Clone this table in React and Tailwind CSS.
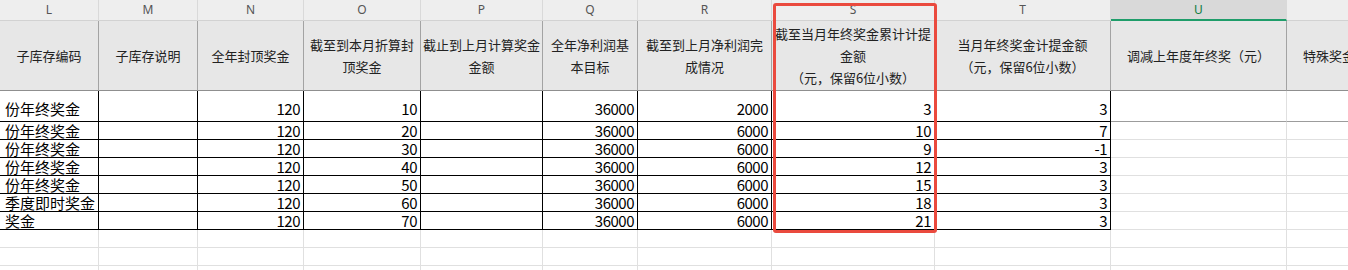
import { Fragment } from "react"

// column widths include the 1px right grid line
const columns = [
    { key: 'L', width: 'w-[99px]' },
    { key: 'M', width: 'w-[99px]' },
    { key: 'N', width: 'w-[106px]' },
    { key: 'O', width: 'w-[117px]' },
    { key: 'P', width: 'w-[122px]' },
    { key: 'Q', width: 'w-[95px]' },
    { key: 'R', width: 'w-[134px]' },
    { key: 'S', width: 'w-[163px]' },
    { key: 'T', width: 'w-[176px]' },
    { key: 'U', width: 'w-[176px]' },
    { key: 'V', width: 'w-[176px]' }
]

const headers = [
    ['子库存编码'],
    ['子库存说明'],
    ['全年封顶奖金'],
    ['截至到本月折算封', '顶奖金'],
    ['截止到上月计算奖金', '金额'],
    ['全年净利润基', '本目标'],
    ['截至到上月净利润完', '成情况'],
    ['截至当月年终奖金累计计提', '金额', '（元，保留6位小数）'],
    ['当月年终奖金计提金额', '（元，保留6位小数）'],
    ['调减上年度年终奖（元）'],
    ['特殊奖金调整金额（元）']
]

const rows = [
    ['份年终奖金', '', 120, 10, '', 36000, 2000, 3, 3],
    ['份年终奖金', '', 120, 20, '', 36000, 6000, 10, 7],
    ['份年终奖金', '', 120, 30, '', 36000, 6000, 9, -1],
    ['份年终奖金', '', 120, 40, '', 36000, 6000, 12, 3],
    ['份年终奖金', '', 120, 50, '', 36000, 6000, 15, 3],
    ['季度即时奖金', '', 120, 60, '', 36000, 6000, 18, 3],
    ['奖金', '', 120, 70, '', 36000, 6000, 21, 3]
]

function App() {
    return (
        <div className="relative w-[1348px] h-[270px] overflow-hidden bg-white font-['Noto_Sans_CJK_SC','Noto_Sans',sans-serif] text-black">
            {/* column letters */}
            <div className="flex h-[21px] bg-[#eeeeee]">
                {columns.map(col => (
                    <div key={col.key} className={`${col.width} shrink-0 flex items-center justify-center text-[12px] font-['Noto_Sans',sans-serif] border-r border-[#d9d9d9] ${col.key === 'U' ? 'bg-[#d9d9d9] text-[#107c41] border-b-2 border-b-[#1f9d6a]' : 'text-[#555555] border-b border-b-[#d2d2d2]'}`}>
                        {col.key}
                    </div>
                ))}
            </div>

            {/* header row */}
            <div className="flex h-[70px]">
                {columns.map((col, i) => (
                    <div key={col.key} className={`${col.width} shrink-0 flex flex-col items-center justify-center bg-[#e7e7e7] border-r border-b border-r-[#a3a3a3] border-b-[#8f8f8f] text-[13px] leading-[22px] text-[#222222] whitespace-nowrap overflow-hidden`}>
                        {headers[i].map(line => <span key={line}>{line}</span>)}
                    </div>
                ))}
            </div>

            {/* data rows */}
            {rows.map((row, r) => (
                <div key={r} className={`flex ${r === 0 ? 'h-[31px]' : 'h-[18px]'}`}>
                    {columns.map((col, c) => {
                        const value = row[c]
                        const inData = c < 9
                        const isText = c === 0
                        return (
                            <div key={col.key} className={`${col.width} shrink-0 flex items-end overflow-hidden whitespace-nowrap ${isText ? 'justify-start pl-[5px] text-[15px]' : 'justify-end pr-[3px] text-[15px] tracking-[-0.5px]'} ${r === 0 ? 'pb-[4px]' : ''} leading-[17px] ${inData ? 'border-r border-b border-black' : `border-r border-b border-r-[#e0e0e0] ${r === 0 ? 'border-b-[#9c9c9c]' : 'border-b-[#e0e0e0]'}`}`}>
                                {inData && value !== '' ? value : ''}
                            </div>
                        )
                    })}
                </div>
            ))}

            {/* empty rows */}
            {[0, 1, 2].map(r => (
                <div key={r} className="flex h-[18px]">
                    {columns.map(col => (
                        <div key={col.key} className={`${col.width} shrink-0 border-r border-b border-[#e0e0e0]`}></div>
                    ))}
                </div>
            ))}

            {/* red highlight over column S */}
            <div className="absolute left-[773px] top-[3px] w-[164px] h-[230px] border-[3px] border-[#ea4a3e] rounded-[3px] pointer-events-none"></div>
        </div>
    )
}
export default App
